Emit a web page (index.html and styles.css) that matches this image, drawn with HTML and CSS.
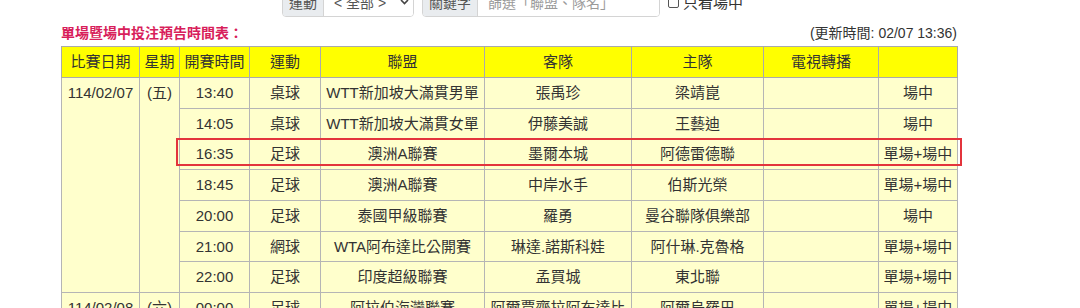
FILE: index.html
```html
<!DOCTYPE html>
<html lang="zh-Hant">
<head>
<meta charset="utf-8">
<title>單場暨場中投注預告時間表</title>
<link rel="stylesheet" href="styles.css">
</head>
<body>
<div class="toolbar">
  <div class="input-group">
    <span class="addon">運動</span>
    <span class="select">&lt; 全部 &gt;<svg class="chev" width="9" height="6" viewBox="0 0 9 6"><path d="M1 1l3.5 3.5L8 1" fill="none" stroke="#444" stroke-width="1.6"/></svg></span>
  </div>
  <div class="input-group kw">
    <span class="addon">關鍵字</span>
    <span class="input">篩選「聯盟、隊名」</span>
  </div>
  <label class="check"><span class="box"></span>只看場中</label>
</div>

<div class="caption">
  <span class="title">單場暨場中投注預告時間表：</span>
  <span class="updated">(更新時間: 02/07 13:36)</span>
</div>

<div class="table-wrap">
  <table class="sched">
    <colgroup>
      <col style="width:78px"><col style="width:40px"><col style="width:70px"><col style="width:71px"><col style="width:164px"><col style="width:147px"><col style="width:132px"><col style="width:115px"><col style="width:79px">
    </colgroup>
    <thead>
      <tr><th>比賽日期</th><th>星期</th><th>開賽時間</th><th>運動</th><th>聯盟</th><th>客隊</th><th>主隊</th><th>電視轉播</th><th></th></tr>
    </thead>
    <tbody>
      <tr><td class="top" rowspan="7">114/02/07</td><td class="top" rowspan="7">(五)</td><td>13:40</td><td>桌球</td><td>WTT新加坡大滿貫男單</td><td>張禹珍</td><td>梁靖崑</td><td></td><td>場中</td></tr>
      <tr><td>14:05</td><td>桌球</td><td>WTT新加坡大滿貫女單</td><td>伊藤美誠</td><td>王藝迪</td><td></td><td>場中</td></tr>
      <tr><td>16:35</td><td>足球</td><td>澳洲A聯賽</td><td>墨爾本城</td><td>阿德雷德聯</td><td></td><td>單場+場中</td></tr>
      <tr><td>18:45</td><td>足球</td><td>澳洲A聯賽</td><td>中岸水手</td><td>伯斯光榮</td><td></td><td>單場+場中</td></tr>
      <tr><td>20:00</td><td>足球</td><td>泰國甲級聯賽</td><td>羅勇</td><td>曼谷聯隊俱樂部</td><td></td><td>場中</td></tr>
      <tr><td>21:00</td><td>網球</td><td>WTA阿布達比公開賽</td><td>琳達.諾斯科娃</td><td>阿什琳.克魯格</td><td></td><td>單場+場中</td></tr>
      <tr><td>22:00</td><td>足球</td><td>印度超級聯賽</td><td>孟買城</td><td>東北聯</td><td></td><td>單場+場中</td></tr>
      <tr><td class="top">114/02/08</td><td class="top">(六)</td><td>00:00</td><td>足球</td><td>阿拉伯海灣聯賽</td><td>阿爾賈齊拉阿布達比</td><td>阿爾烏羅巴</td><td></td><td>單場+場中</td></tr>
    </tbody>
  </table>
  <div class="highlight"></div>
</div>
</body>
</html>
```

FILE: styles.css
```css
html, body {
  margin: 0;
  padding: 0;
  overflow: hidden;
  background: #ffffff;
}
body {
  font-family: "Liberation Sans", "Noto Sans CJK TC", sans-serif;
  color: #333333;
  font-size: 14px;
}
.toolbar {
  display: flex;
  align-items: center;
  height: 31px;
  margin-top: -14px;
  padding-left: 282px;
}
.input-group {
  display: flex;
  height: 31px;
  border: 1px solid #d4d4d4;
  border-radius: 4px;
  box-sizing: border-box;
  overflow: hidden;
}
.input-group.kw {
  margin-left: 8px;
}
.addon {
  display: flex;
  align-items: center;
  padding: 0 6px;
  background: #e9ecef;
  border-right: 1px solid #d4d4d4;
  color: #555555;
}
.select {
  display: flex;
  align-items: center;
  width: 89px;
  padding-left: 10px;
  box-sizing: border-box;
  background: #ffffff;
  color: #555555;
}
.chev {
  margin-left: 14px;
}
.input {
  display: flex;
  align-items: center;
  width: 181px;
  padding-left: 10px;
  box-sizing: border-box;
  background: #ffffff;
  color: #9a9a9a;
}
.check {
  display: flex;
  align-items: center;
  margin-left: 8px;
  color: #333333;
  font-size: 15px;
}
.box {
  display: inline-block;
  width: 9px;
  height: 11px;
  border: 1px solid #555;
  border-radius: 2px;
  margin-right: 4px;
}
.caption {
  display: flex;
  justify-content: space-between;
  align-items: center;
  width: 896px;
  height: 20px;
  margin: 6px 0 0 61px;
}
.title {
  color: #d81e5b;
  font-weight: bold;
  font-size: 14px;
  line-height: 20px;
}
.updated {
  font-size: 14px;
  line-height: 20px;
  color: #333333;
}
.table-wrap {
  position: relative;
  margin: 3px 0 0 61px;
  width: 896px;
}
.sched {
  border-collapse: collapse;
  table-layout: fixed;
  width: 896px;
  font-size: 15px;
}
.sched th {
  background: #ffff00;
  font-weight: normal;
  color: #333333;
  border: 1px solid #aaaaaa;
  padding: 4px 0;
  line-height: 22px;
  text-align: center;
  white-space: nowrap;
}
.sched td {
  background: #ffffcc;
  border: 1px solid #b5b5b5;
  padding: 4px 0;
  line-height: 21.7px;
  text-align: center;
  white-space: nowrap;
  overflow: hidden;
}
.sched td.top {
  vertical-align: top;
}
.highlight {
  position: absolute;
  left: 115px;
  top: 92px;
  width: 786px;
  height: 28px;
  box-sizing: border-box;
  border: 2px solid #e3343c;
}
```
